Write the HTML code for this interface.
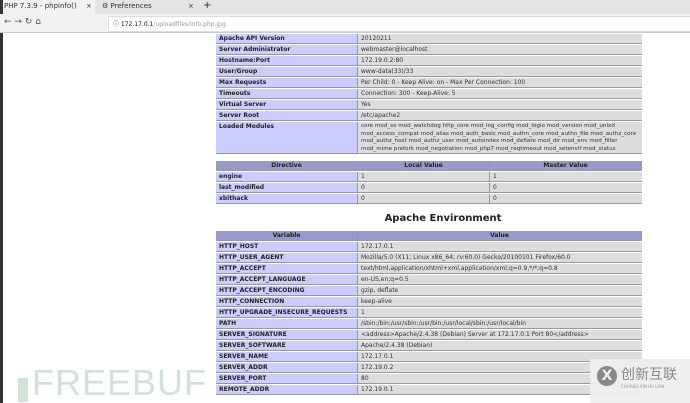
<!DOCTYPE html><html><head><style>
body{margin:0;width:690px;height:403px;overflow:hidden;background:#fff;font-family:"DejaVu Sans","Liberation Sans",sans-serif;position:relative}
.a{position:absolute}
.r{position:absolute;height:10px;font-size:6px;line-height:10px;white-space:nowrap;overflow:hidden;box-sizing:border-box;padding-left:3px;border-bottom:1px solid #999}
.k{background:#ccf;font-weight:bold;color:#222;border-right:1px solid #999}
.v{background:#ddd;color:#333}
.h{background:#99c;font-weight:bold;text-align:center;color:#222;padding-left:0;border-right:1px solid #999}
</style></head><body>
<div class="a" style="left:0;top:0;width:690px;height:14px;background:#e4e4e4"></div>
<div class="a" style="left:0;top:0;width:95px;height:14px;background:#f2f2f2"></div>
<div class="a" style="left:0;top:0;width:3px;height:403px;background:#333"></div>
<div class="a" style="left:4px;top:2px;font-size:7px;color:#333">PHP 7.3.9 - phpinfo()</div>
<div class="a" style="left:86px;top:2px;font-size:7px;color:#333">×</div>
<div class="a" style="left:102px;top:2px;font-size:7px;color:#333">⚙ Preferences</div>
<div class="a" style="left:188px;top:2px;font-size:7px;color:#333">×</div>
<div class="a" style="left:203px;top:0px;font-size:10px;color:#333">+</div>
<div class="a" style="left:0;top:14px;width:690px;height:18px;background:#f2f2f2;border-bottom:1px solid #ccc"></div>
<div class="a" style="left:4px;top:17px;font-size:9px;color:#555">← → ↻ ⌂</div>
<div class="a" style="left:108px;top:16px;width:582px;height:14px;background:#fff;border:1px solid #ddd"></div>
<div class="a" style="left:113px;top:19px;font-size:6px;color:#333">ⓘ <b style="font-weight:normal;color:#111">172.17.0.1</b><span style="color:#999">/uploadfiles/info.php.jpg</span></div>

<div class="r k" style="left:216px;top:34px;width:142px">Apache API Version</div><div class="r v" style="left:358px;top:34px;width:284px">20120211</div>
<div class="r k" style="left:216px;top:45px;width:142px">Server Administrator</div><div class="r v" style="left:358px;top:45px;width:284px">webmaster@localhost</div>
<div class="r k" style="left:216px;top:56px;width:142px">Hostname:Port</div><div class="r v" style="left:358px;top:56px;width:284px">172.19.0.2:80</div>
<div class="r k" style="left:216px;top:67px;width:142px">User/Group</div><div class="r v" style="left:358px;top:67px;width:284px">www-data(33)/33</div>
<div class="r k" style="left:216px;top:78px;width:142px">Max Requests</div><div class="r v" style="left:358px;top:78px;width:284px">Per Child: 0 - Keep Alive: on - Max Per Connection: 100</div>
<div class="r k" style="left:216px;top:89px;width:142px">Timeouts</div><div class="r v" style="left:358px;top:89px;width:284px">Connection: 300 - Keep-Alive: 5</div>
<div class="r k" style="left:216px;top:100px;width:142px">Virtual Server</div><div class="r v" style="left:358px;top:100px;width:284px">Yes</div>
<div class="r k" style="left:216px;top:111px;width:142px">Server Root</div><div class="r v" style="left:358px;top:111px;width:284px">/etc/apache2</div>
<div class="r k" style="left:216px;top:122px;width:142px;height:32px;line-height:8px;padding-top:1px">Loaded Modules</div><div class="r v" style="left:358px;top:122px;width:284px;height:32px;line-height:7.5px;white-space:normal;padding-top:1px;font-size:5.6px">core mod_so mod_watchdog http_core mod_log_config mod_logio mod_version mod_unixd mod_access_compat mod_alias mod_auth_basic mod_authn_core mod_authn_file mod_authz_core mod_authz_host mod_authz_user mod_autoindex mod_deflate mod_dir mod_env mod_filter mod_mime prefork mod_negotiation mod_php7 mod_reqtimeout mod_setenvif mod_status</div>

<div class="r h" style="left:216px;top:161px;width:142px">Directive</div><div class="r h" style="left:358px;top:161px;width:132px">Local Value</div><div class="r h" style="left:490px;top:161px;width:152px">Master Value</div>
<div class="r k" style="left:216px;top:172px;width:142px">engine</div><div class="r v" style="left:358px;top:172px;width:132px;border-right:1px solid #999">1</div><div class="r v" style="left:490px;top:172px;width:152px">1</div>
<div class="r k" style="left:216px;top:183px;width:142px">last_modified</div><div class="r v" style="left:358px;top:183px;width:132px;border-right:1px solid #999">0</div><div class="r v" style="left:490px;top:183px;width:152px">0</div>
<div class="r k" style="left:216px;top:194px;width:142px">xbithack</div><div class="r v" style="left:358px;top:194px;width:132px;border-right:1px solid #999">0</div><div class="r v" style="left:490px;top:194px;width:152px">0</div>

<div class="a" style="left:216px;width:454px;top:213px;text-align:center;font-size:10px;font-weight:bold;color:#222">Apache Environment</div>

<div class="r h" style="left:216px;top:231px;width:142px">Variable</div><div class="r h" style="left:358px;top:231px;width:284px">Value</div>
<div class="r k" style="left:216px;top:242px;width:142px">HTTP_HOST</div><div class="r v" style="left:358px;top:242px;width:284px">172.17.0.1</div>
<div class="r k" style="left:216px;top:253px;width:142px">HTTP_USER_AGENT</div><div class="r v" style="left:358px;top:253px;width:284px">Mozilla/5.0 (X11; Linux x86_64; rv:60.0) Gecko/20100101 Firefox/60.0</div>
<div class="r k" style="left:216px;top:264px;width:142px">HTTP_ACCEPT</div><div class="r v" style="left:358px;top:264px;width:284px">text/html,application/xhtml+xml,application/xml;q=0.9,*/*;q=0.8</div>
<div class="r k" style="left:216px;top:275px;width:142px">HTTP_ACCEPT_LANGUAGE</div><div class="r v" style="left:358px;top:275px;width:284px">en-US,en;q=0.5</div>
<div class="r k" style="left:216px;top:286px;width:142px">HTTP_ACCEPT_ENCODING</div><div class="r v" style="left:358px;top:286px;width:284px">gzip, deflate</div>
<div class="r k" style="left:216px;top:297px;width:142px">HTTP_CONNECTION</div><div class="r v" style="left:358px;top:297px;width:284px">keep-alive</div>
<div class="r k" style="left:216px;top:308px;width:142px">HTTP_UPGRADE_INSECURE_REQUESTS</div><div class="r v" style="left:358px;top:308px;width:284px">1</div>
<div class="r k" style="left:216px;top:319px;width:142px">PATH</div><div class="r v" style="left:358px;top:319px;width:284px">/sbin:/bin:/usr/sbin:/usr/bin:/usr/local/sbin:/usr/local/bin</div>
<div class="r k" style="left:216px;top:330px;width:142px">SERVER_SIGNATURE</div><div class="r v" style="left:358px;top:330px;width:284px">&lt;address&gt;Apache/2.4.38 (Debian) Server at 172.17.0.1 Port 80&lt;/address&gt;</div>
<div class="r k" style="left:216px;top:341px;width:142px">SERVER_SOFTWARE</div><div class="r v" style="left:358px;top:341px;width:284px">Apache/2.4.38 (Debian)</div>
<div class="r k" style="left:216px;top:352px;width:142px">SERVER_NAME</div><div class="r v" style="left:358px;top:352px;width:284px">172.17.0.1</div>
<div class="r k" style="left:216px;top:363px;width:142px">SERVER_ADDR</div><div class="r v" style="left:358px;top:363px;width:284px">172.19.0.2</div>
<div class="r k" style="left:216px;top:374px;width:142px">SERVER_PORT</div><div class="r v" style="left:358px;top:374px;width:284px">80</div>
<div class="r k" style="left:216px;top:385px;width:142px">REMOTE_ADDR</div><div class="r v" style="left:358px;top:385px;width:284px">172.19.0.1</div>

<div class="a" style="left:18px;top:378px;width:10px;height:24px;background:#d3e2d8"></div>
<div class="a" style="left:32px;top:365px;font-size:36px;line-height:36px;color:#d3e2d8;font-family:'Liberation Sans',sans-serif;letter-spacing:1px">FREEBUF</div>
<div class="a" style="left:590px;top:359px;width:100px;height:44px;background:rgba(238,238,238,.95)"></div>
<div class="a" style="left:597px;top:366px;width:20px;height:20px;border-radius:50%;background:#888;color:#eee;font-size:14px;line-height:20px;text-align:center;font-weight:bold">X</div>
<div class="a" style="left:621px;top:366px;font-size:14px;color:#888;font-family:'Noto Sans CJK SC',sans-serif;line-height:16px">创新互联</div>
<div class="a" style="left:621px;top:384px;font-size:4px;color:#999">CHUANG XIN HU LIAN</div>
</body></html>
